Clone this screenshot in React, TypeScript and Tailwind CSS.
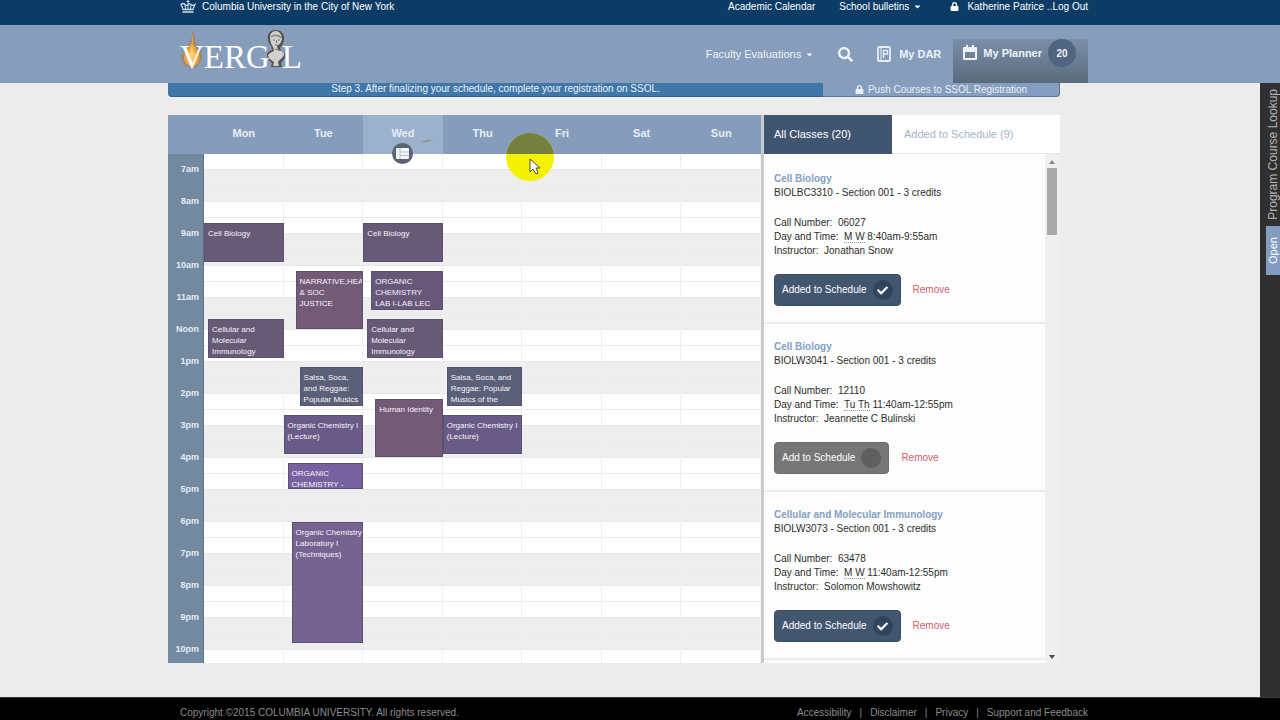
import { useState } from "react";
import { FaLock, FaSearch, FaCheck, FaCaretDown } from "react-icons/fa";

type CalendarEvent = {
  title: string;
  start: number;
  end: number;
  inset: number;
  color: string;
};

type Course = {
  name: string;
  section: string;
  callNumber: string;
  days: string;
  time: string;
  instructor: string;
  added: boolean;
};

const HOURS = ["7am", "8am", "9am", "10am", "11am", "Noon", "1pm", "2pm", "3pm", "4pm", "5pm", "6pm", "7pm", "8pm", "9pm", "10pm"];

const PLUM = "bg-[#665a76]";
const SLATE = "bg-[#5a6078]";
const MAUVE = "bg-[#735a76]";
const VIOLET = "bg-[#685b88]";

// start and end are minutes after 7am
const WEEK: { day: string; events: CalendarEvent[] }[] = [
  {
    day: "Mon",
    events: [
      { title: "Cell Biology", start: 100, end: 175, inset: 0, color: PLUM },
      { title: "Cellular and Molecular Immunology", start: 280, end: 355, inset: 4, color: PLUM },
    ],
  },
  {
    day: "Tue",
    events: [
      { title: "NARRATIVE,HEA\n& SOC\nJUSTICE", start: 190, end: 300, inset: 12, color: MAUVE },
      { title: "Salsa, Soca, and Reggae: Popular Musics", start: 370, end: 445, inset: 16, color: SLATE },
      { title: "Organic Chemistry I (Lecture)", start: 460, end: 535, inset: 0, color: VIOLET },
      { title: "ORGANIC CHEMISTRY -", start: 550, end: 600, inset: 4, color: "bg-[#7861a0]" },
      { title: "Organic Chemistry Laboratory I (Techniques)", start: 660, end: 888, inset: 8, color: "bg-[#776390]" },
    ],
  },
  {
    day: "Wed",
    events: [
      { title: "Cell Biology", start: 100, end: 175, inset: 0, color: PLUM },
      { title: "ORGANIC\nCHEMISTRY\nLAB I-LAB LEC", start: 190, end: 265, inset: 8, color: "bg-[#67587a]" },
      { title: "Cellular and Molecular Immunology", start: 280, end: 355, inset: 4, color: PLUM },
      { title: "Human Identity", start: 430, end: 540, inset: 12, color: MAUVE },
    ],
  },
  {
    day: "Thu",
    events: [
      { title: "Salsa, Soca, and Reggae: Popular Musics of the", start: 370, end: 445, inset: 4, color: SLATE },
      { title: "Organic Chemistry I (Lecture)", start: 460, end: 535, inset: 0, color: VIOLET },
    ],
  },
  { day: "Fri", events: [] },
  { day: "Sat", events: [] },
  { day: "Sun", events: [] },
];

const COURSES: Course[] = [
  { name: "Cell Biology", section: "BIOLBC3310 - Section 001 - 3 credits", callNumber: "06027", days: "M W", time: "8:40am-9:55am", instructor: "Jonathan Snow", added: true },
  { name: "Cell Biology", section: "BIOLW3041 - Section 001 - 3 credits", callNumber: "12110", days: "Tu Th", time: "11:40am-12:55pm", instructor: "Jeannette C Bulinski", added: false },
  { name: "Cellular and Molecular Immunology", section: "BIOLW3073 - Section 001 - 3 credits", callNumber: "63478", days: "M W", time: "11:40am-12:55pm", instructor: "Solomon Mowshowitz", added: true },
];

const HOUR_HEIGHT = 32;
const toPx = (minutes: number) => Math.round((minutes * HOUR_HEIGHT) / 60);

function CrownIcon() {
  return (
    <svg width="16" height="13" viewBox="0 0 16 13" fill="none" stroke="#cfdcea" strokeWidth="1.3">
      <path d="M3 9L1 4.500Q3 2.500 5 4.500T8 5Q9 3 11 4.500T15 4.500L13 9" />
      <path d="M8 0v9M6.500 1.500h3M5 5l.5 4M11 5l-.5 4" strokeWidth="1" />
      <path d="M2.500 9.500h11M2.500 12h11" strokeWidth="1.600" />
    </svg>
  );
}

function Logo() {
  return (
    <a href="#" aria-label="Vergil" className="relative flex items-end pb-2 font-['Liberation_Serif',serif] text-[33px] leading-[36px] text-white">
      <svg className="absolute bottom-3 left-0" width="26" height="42" viewBox="0 0 26 42">
        <path d="M12 1c4 5 2 9 4 13 4 5 7 9 6 15-1 6-5 10-10 10S2 36 1 29c0-5 4-8 7-13 3-4 5-9 4-15Z" fill="#a08872" />
        <path d="M12 5c2 5 0 8 2 12 4 5 6 8 5 13-1 5-3 7-7 7s-7-3-8-8c0-5 4-8 6-12 2-3 3-7 2-12Z" fill="#efa63c" />
        <path d="M12 16c0 5 4 8 4 13 0 4-2 7-4 7s-4-3-4-7c0-5 3-7 4-13Z" fill="#ffc868" />
      </svg>
      <span className="relative">VERG</span>
      <svg className="-mx-[6px] mb-1.5" width="24" height="40" viewBox="0 0 22 40">
        <path d="M3 10C2 4 6 1 11 1s9 4 8 10c-1 4-2 6-4 8l1 3c3 1 5 2 4 6-1 3-3 4-4 6l1 4H6l1-4c-3-2-5-5-5-8 0-3 3-4 5-5l-1-4C4 15 3 13 3 10Z" fill="#55504f" />
        <path d="M5 8c0-4 3-6 6-6s6 3 6 8c-1 4-3 6-5 7l1 4c3 1 7 2 6 5-1 3-4 4-6 7l1 4H8l1-4c-3-2-6-4-6-7 1-2 4-3 6-4l-1-4C6 15 5 12 5 8Z" fill="#d2d0ce" />
        <path d="M6 8q5-4 11 1" stroke="#8b8583" strokeWidth="1.500" fill="none" />
        <path d="M8 11h2M13 11h2M11.500 11v3M10 16h3M10 20l4 1" stroke="#77706e" fill="none" />
      </svg>
      <span className="relative">L</span>
    </a>
  );
}

function DarIcon() {
  return (
    <svg width="14" height="16" viewBox="0 0 14 16" fill="none" stroke="#e7eef7" strokeWidth="1.8">
      <rect x="1" y="1" width="12" height="14" rx="1" />
      <path d="M4 1v14" strokeWidth="1" />
      <path d="M6.500 12V4.500h4v3.500h-4" strokeWidth="1.300" />
    </svg>
  );
}

function CalendarIcon() {
  return (
    <svg width="14" height="16" viewBox="0 0 14 16">
      <path fill="#eef3f9" fillRule="evenodd" d="M3 0h2v2h4V0h2v2h2q1 0 1 1v11q0 1-1 1H1q-1 0-1-1V3q0-1 1-1h2ZM2 7v6h10V7Z" />
    </svg>
  );
}

function TopBar() {
  return (
    <div className="h-[25px] bg-[#0c3c66] pr-3 text-[10px] text-white">
      <div className="mx-auto flex max-w-[908px] justify-between leading-[13px]">
        <a href="#" className="flex gap-1.5"><CrownIcon />Columbia University in the City of New York</a>
        <nav className="flex">
          <a href="#">Academic Calendar</a>
          <button className="ml-6 flex items-center gap-1">School bulletins <FaCaretDown size={9} /></button>
          <a href="#" className="ml-7 flex items-center gap-2"><FaLock size={9} />Katherine Patrice ..Log Out</a>
        </nav>
      </div>
    </div>
  );
}

function Header() {
  return (
    <header className="h-[58px] bg-[#869dbb] pr-3">
      <div className="mx-auto flex h-full max-w-[908px] justify-between">
        <Logo />
        <nav className="flex items-center text-[11px] text-[#eef3f9]">
          <button className="flex items-center gap-1">Faculty Evaluations <FaCaretDown size={9} /></button>
          <button aria-label="Search" className="ml-6"><FaSearch size={15} /></button>
          <a href="#" className="ml-6 flex items-center gap-2 font-bold"><DarIcon />My DAR</a>
          <a href="#" className="ml-3 flex h-11 items-center gap-1.5 self-end bg-linear-to-b from-[#7c8fa8] to-[#5a6b7e] pr-3 pb-4 pl-2.5 font-bold">
            <CalendarIcon />My Planner
            <span className="flex size-7 items-center justify-center rounded-full bg-[#506580] text-[10px]">20</span>
          </a>
        </nav>
      </div>
    </header>
  );
}

function Schedule() {
  return (
    <section className="min-w-0 flex-1">
      <div className="flex h-[39px] bg-[#859cbb] text-[11px] font-bold text-[#e8eef6]">
        <div className="w-9" />
        {WEEK.map(({ day }) => (
          <div key={day} className={day === "Wed" ? "relative flex flex-1 justify-center bg-[#9bb1cc] pt-2.5" : "flex flex-1 justify-center pt-2.5"}>
            {day}
            {day === "Wed" && (
              <>
                <svg className="absolute top-6 right-2.5" width="12" height="4" viewBox="0 0 12 4">
                  <path d="M0 3q6-3 12-2-5 3-12 2Z" fill="#8b9a86" />
                </svg>
                <button aria-label="List view" className="absolute -bottom-2.5 z-10 flex size-[21px] items-center justify-center rounded-full bg-[#596371]">
                  <svg width="13" height="11" viewBox="0 0 13 11">
                    <rect width="13" height="11" rx="1" fill="#f3f7fb" />
                    <path d="M4 0v11M4 4h9M4 7.500h9" stroke="#aab4c0" strokeWidth=".8" />
                  </svg>
                </button>
              </>
            )}
          </div>
        ))}
      </div>
      <div className="flex h-[509px] overflow-hidden">
        <div className="w-9 border-r border-[#5d7286] bg-[#72899f] pt-[7px] pr-1 text-right text-[9px] font-bold text-[#e4ecf4]">
          {HOURS.map((h) => <div key={h} className="h-8 leading-[16px]">{h}</div>)}
        </div>
        <div className="relative min-w-0 flex-1 bg-white">
          <div className="pt-[15px]">
            {HOURS.map((h) => (
              <div key={h} className="h-8 border-t border-[#e8e8e8] odd:bg-[#eeeeee]">
                <div className="h-4 border-b border-[#ebebeb]" />
              </div>
            ))}
          </div>
          <div className="absolute inset-0 flex">
            {WEEK.map(({ day, events }) => (
              <div key={day} className="relative flex-1 border-r border-[#efefef]">
                {events.map((ev) => (
                  <div
                    key={ev.title}
                    className={`absolute -right-px overflow-hidden border border-[#5b5070] pt-1 pl-[3px] text-[8px] leading-[11px] whitespace-pre-line text-[#f8f2fb] ${ev.color}`}
                    style={{ top: 16 + toPx(ev.start), height: toPx(ev.end - ev.start) - 1, left: ev.inset }}
                  >
                    {ev.title}
                  </div>
                ))}
              </div>
            ))}
          </div>
        </div>
      </div>
    </section>
  );
}

function CourseItem({ course }: { course: Course }) {
  const [added, setAdded] = useState(course.added);

  return (
    <li className="h-[168px] border-b-2 border-[#ececec] px-2.5 pt-4 text-[10px] leading-[14px] text-[#2d2d2d]">
      <a href="#" className="block font-bold text-[#84a0c3]">{course.name}</a>
      <p>{course.section}</p>
      <div className="mt-4">
        <p>Call Number: &nbsp;{course.callNumber}</p>
        <p>Day and Time: &nbsp;<abbr title="Days" className="border-b border-dotted border-[#999999] no-underline">{course.days}</abbr> {course.time}</p>
        <p>Instructor: &nbsp;{course.instructor}</p>
      </div>
      <div className="mt-4 flex items-center gap-3">
        <button
          onClick={() => setAdded(!added)}
          className={`flex h-8 items-center gap-1.5 rounded-[4px] border px-[7px] text-white ${added ? "border-[#374c64] bg-[#425670]" : "border-[#6c6c6c] bg-[#767676]"}`}
        >
          {added ? "Added to Schedule" : "Add to Schedule"}
          <span className={`flex size-5 items-center justify-center rounded-full ${added ? "bg-[#2f435c]" : "bg-[#5f5f5f]"}`}>
            {added && <FaCheck size={11} />}
          </span>
        </button>
        <button className="text-[#d0606c]">Remove</button>
      </div>
    </li>
  );
}

function ClassList() {
  return (
    <aside className="flex w-[299px] flex-col border-l-3 border-[#c9cccf] bg-white">
      <div className="flex h-[39px] text-[11px]">
        <button className="w-32 bg-[#405570] pl-2.5 text-left text-white">All Classes (20)</button>
        <button className="flex-1 border-b border-[#e6e6e6] pl-3 text-left text-[#a5b4c8]">Added to Schedule (9)</button>
      </div>
      <div className="flex h-[509px] bg-[#efefef]">
        <ul className="flex-1 overflow-hidden bg-[#fdfdfd] pt-0.5">
          {COURSES.map((c) => <CourseItem key={c.section} course={c} />)}
        </ul>
        <div className="flex w-[15px] flex-col items-center justify-between py-1 pr-px">
          <div className="flex flex-col items-center gap-1">
            <span className="mt-0.5 border-x-3 border-b-4 border-x-transparent border-b-[#8a8a8a]" />
            <span className="h-[67px] w-[10px] bg-[#a9a9a9]" />
          </div>
          <span className="border-x-3 border-t-4 border-x-transparent border-t-[#4a4a4a]" />
        </div>
      </div>
    </aside>
  );
}

function Pointer() {
  return (
    <svg className="pointer-events-none absolute top-[49px] left-[337px] z-20" width="50" height="50" viewBox="0 0 50 50">
      <circle cx="25" cy="25" r="24" fill="#f3f000" />
      <path d="M1.200 22A24 24 0 0 1 48.800 22Z" fill="#75803f" />
      <path d="M25 27v13l3-3 3 5 2-1-2-5h4Z" fill="#fff" stroke="#4b4a3a" />
    </svg>
  );
}

export default function App() {
  return (
    <div className="flex min-h-screen flex-col overflow-hidden bg-[#ececec] font-['Liberation_Sans',Arial,sans-serif]">
      <TopBar />
      <Header />
      <div className="flex flex-1">
        <main className="flex-1 pr-8 pb-8">
          <div className="relative mx-auto max-w-[892px]">
            <div className="flex h-[14px] text-[10px] leading-[12px] text-[#eaf1f8]">
              <div className="flex-1 rounded-bl-sm border-b border-[#2f5f8f] bg-[#4077a8] text-center">
                Step 3. After finalizing your schedule, complete your registration on SSOL.
              </div>
              <button className="flex w-[237px] items-center justify-center gap-1 rounded-br-sm border-r border-b border-[#5d7595] bg-[#859dbe]">
                <FaLock size={9} />Push Courses to SSOL Registration
              </button>
            </div>
            <div className="mt-[18px] flex">
              <Schedule />
              <ClassList />
            </div>
            <Pointer />
          </div>
        </main>
        <div className="flex w-5 flex-col overflow-hidden bg-[#303030] pt-1.5">
          <a href="#" className="ml-1.5 rotate-180 text-[12px] leading-[14px] whitespace-nowrap text-[#b5b5b5] [writing-mode:vertical-rl]">Program Course Lookup</a>
          <button className="mt-1.5 ml-1.5 h-[49px] w-3.5 rotate-180 bg-[#839dc2] text-[11px] leading-[14px] text-white [writing-mode:vertical-rl]">Open</button>
        </div>
      </div>
      <footer className="h-[23px] border-t border-[#3a3a3a] bg-black pr-3 text-[10px] text-[#8c8c8c]">
        <div className="mx-auto flex max-w-[908px] justify-between pt-2 leading-[14px]">
          <p>Copyright ©2015 COLUMBIA UNIVERSITY. All rights reserved.</p>
          <nav className="flex gap-2">
            <a href="#">Accessibility</a>|<a href="#">Disclaimer</a>|<a href="#">Privacy</a>|<a href="#">Support and Feedback</a>
          </nav>
        </div>
      </footer>
    </div>
  );
}
